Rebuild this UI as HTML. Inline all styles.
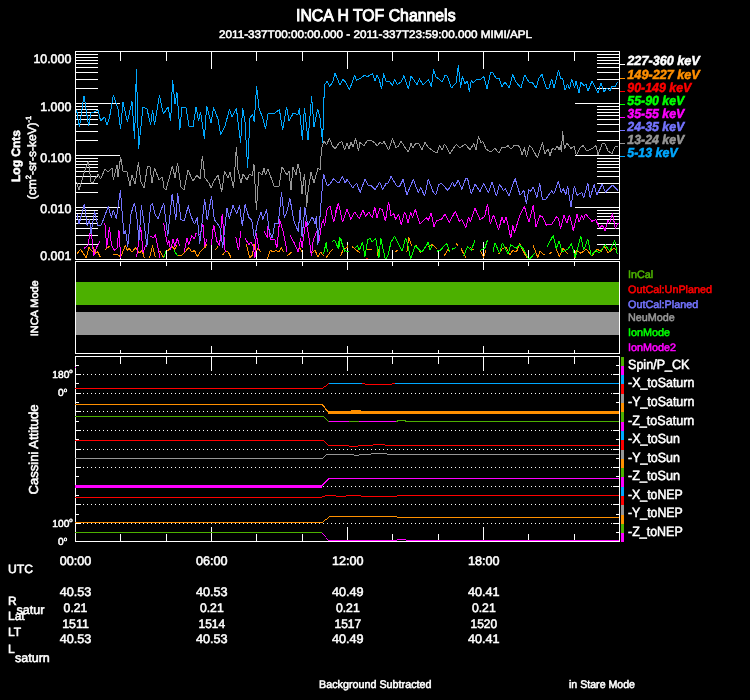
<!DOCTYPE html>
<html><head><meta charset="utf-8"><title>INCA H TOF Channels</title>
<style>
html,body{margin:0;padding:0;background:#000;}
svg{display:block;font-family:"Liberation Sans",sans-serif;will-change:transform;}
text{stroke-width:0.55px;text-rendering:geometricPrecision;}
</style></head><body>
<svg width="750" height="700" viewBox="0 0 750 700" shape-rendering="crispEdges">
<defs><clipPath id="ctop"><rect x="76" y="52" width="543" height="207"/></clipPath></defs>
<rect x="75" y="51" width="545" height="1" fill="#FFFFFF"/>
<rect x="75" y="259" width="545" height="1" fill="#FFFFFF"/>
<rect x="75" y="51" width="1" height="209" fill="#FFFFFF"/>
<rect x="619" y="51" width="1" height="209" fill="#FFFFFF"/>
<rect x="75" y="51" width="1" height="18" fill="#FFFFFF"/>
<rect x="75" y="242" width="1" height="18" fill="#FFFFFF"/>
<rect x="120" y="51" width="1" height="10" fill="#FFFFFF"/>
<rect x="120" y="250" width="1" height="10" fill="#FFFFFF"/>
<rect x="166" y="51" width="1" height="10" fill="#FFFFFF"/>
<rect x="166" y="250" width="1" height="10" fill="#FFFFFF"/>
<rect x="211" y="51" width="1" height="18" fill="#FFFFFF"/>
<rect x="211" y="242" width="1" height="18" fill="#FFFFFF"/>
<rect x="256" y="51" width="1" height="10" fill="#FFFFFF"/>
<rect x="256" y="250" width="1" height="10" fill="#FFFFFF"/>
<rect x="302" y="51" width="1" height="10" fill="#FFFFFF"/>
<rect x="302" y="250" width="1" height="10" fill="#FFFFFF"/>
<rect x="347" y="51" width="1" height="18" fill="#FFFFFF"/>
<rect x="347" y="242" width="1" height="18" fill="#FFFFFF"/>
<rect x="392" y="51" width="1" height="10" fill="#FFFFFF"/>
<rect x="392" y="250" width="1" height="10" fill="#FFFFFF"/>
<rect x="438" y="51" width="1" height="10" fill="#FFFFFF"/>
<rect x="438" y="250" width="1" height="10" fill="#FFFFFF"/>
<rect x="483" y="51" width="1" height="18" fill="#FFFFFF"/>
<rect x="483" y="242" width="1" height="18" fill="#FFFFFF"/>
<rect x="528" y="51" width="1" height="10" fill="#FFFFFF"/>
<rect x="528" y="250" width="1" height="10" fill="#FFFFFF"/>
<rect x="574" y="51" width="1" height="10" fill="#FFFFFF"/>
<rect x="574" y="250" width="1" height="10" fill="#FFFFFF"/>
<rect x="619" y="51" width="1" height="18" fill="#FFFFFF"/>
<rect x="619" y="242" width="1" height="18" fill="#FFFFFF"/>
<rect x="75" y="103" width="45" height="1" fill="#FFFFFF"/>
<rect x="575" y="103" width="45" height="1" fill="#FFFFFF"/>
<rect x="75" y="88" width="23" height="1" fill="#FFFFFF"/>
<rect x="597" y="88" width="23" height="1" fill="#FFFFFF"/>
<rect x="75" y="79" width="23" height="1" fill="#FFFFFF"/>
<rect x="597" y="79" width="23" height="1" fill="#FFFFFF"/>
<rect x="75" y="72" width="23" height="1" fill="#FFFFFF"/>
<rect x="597" y="72" width="23" height="1" fill="#FFFFFF"/>
<rect x="75" y="67" width="23" height="1" fill="#FFFFFF"/>
<rect x="597" y="67" width="23" height="1" fill="#FFFFFF"/>
<rect x="75" y="63" width="23" height="1" fill="#FFFFFF"/>
<rect x="597" y="63" width="23" height="1" fill="#FFFFFF"/>
<rect x="75" y="60" width="23" height="1" fill="#FFFFFF"/>
<rect x="597" y="60" width="23" height="1" fill="#FFFFFF"/>
<rect x="75" y="57" width="23" height="1" fill="#FFFFFF"/>
<rect x="597" y="57" width="23" height="1" fill="#FFFFFF"/>
<rect x="75" y="54" width="23" height="1" fill="#FFFFFF"/>
<rect x="597" y="54" width="23" height="1" fill="#FFFFFF"/>
<rect x="75" y="155" width="45" height="1" fill="#FFFFFF"/>
<rect x="575" y="155" width="45" height="1" fill="#FFFFFF"/>
<rect x="75" y="140" width="23" height="1" fill="#FFFFFF"/>
<rect x="597" y="140" width="23" height="1" fill="#FFFFFF"/>
<rect x="75" y="131" width="23" height="1" fill="#FFFFFF"/>
<rect x="597" y="131" width="23" height="1" fill="#FFFFFF"/>
<rect x="75" y="124" width="23" height="1" fill="#FFFFFF"/>
<rect x="597" y="124" width="23" height="1" fill="#FFFFFF"/>
<rect x="75" y="119" width="23" height="1" fill="#FFFFFF"/>
<rect x="597" y="119" width="23" height="1" fill="#FFFFFF"/>
<rect x="75" y="115" width="23" height="1" fill="#FFFFFF"/>
<rect x="597" y="115" width="23" height="1" fill="#FFFFFF"/>
<rect x="75" y="112" width="23" height="1" fill="#FFFFFF"/>
<rect x="597" y="112" width="23" height="1" fill="#FFFFFF"/>
<rect x="75" y="109" width="23" height="1" fill="#FFFFFF"/>
<rect x="597" y="109" width="23" height="1" fill="#FFFFFF"/>
<rect x="75" y="106" width="23" height="1" fill="#FFFFFF"/>
<rect x="597" y="106" width="23" height="1" fill="#FFFFFF"/>
<rect x="75" y="207" width="45" height="1" fill="#FFFFFF"/>
<rect x="575" y="207" width="45" height="1" fill="#FFFFFF"/>
<rect x="75" y="192" width="23" height="1" fill="#FFFFFF"/>
<rect x="597" y="192" width="23" height="1" fill="#FFFFFF"/>
<rect x="75" y="183" width="23" height="1" fill="#FFFFFF"/>
<rect x="597" y="183" width="23" height="1" fill="#FFFFFF"/>
<rect x="75" y="176" width="23" height="1" fill="#FFFFFF"/>
<rect x="597" y="176" width="23" height="1" fill="#FFFFFF"/>
<rect x="75" y="171" width="23" height="1" fill="#FFFFFF"/>
<rect x="597" y="171" width="23" height="1" fill="#FFFFFF"/>
<rect x="75" y="167" width="23" height="1" fill="#FFFFFF"/>
<rect x="597" y="167" width="23" height="1" fill="#FFFFFF"/>
<rect x="75" y="164" width="23" height="1" fill="#FFFFFF"/>
<rect x="597" y="164" width="23" height="1" fill="#FFFFFF"/>
<rect x="75" y="161" width="23" height="1" fill="#FFFFFF"/>
<rect x="597" y="161" width="23" height="1" fill="#FFFFFF"/>
<rect x="75" y="158" width="23" height="1" fill="#FFFFFF"/>
<rect x="597" y="158" width="23" height="1" fill="#FFFFFF"/>
<rect x="75" y="244" width="23" height="1" fill="#FFFFFF"/>
<rect x="597" y="244" width="23" height="1" fill="#FFFFFF"/>
<rect x="75" y="235" width="23" height="1" fill="#FFFFFF"/>
<rect x="597" y="235" width="23" height="1" fill="#FFFFFF"/>
<rect x="75" y="228" width="23" height="1" fill="#FFFFFF"/>
<rect x="597" y="228" width="23" height="1" fill="#FFFFFF"/>
<rect x="75" y="223" width="23" height="1" fill="#FFFFFF"/>
<rect x="597" y="223" width="23" height="1" fill="#FFFFFF"/>
<rect x="75" y="219" width="23" height="1" fill="#FFFFFF"/>
<rect x="597" y="219" width="23" height="1" fill="#FFFFFF"/>
<rect x="75" y="216" width="23" height="1" fill="#FFFFFF"/>
<rect x="597" y="216" width="23" height="1" fill="#FFFFFF"/>
<rect x="75" y="213" width="23" height="1" fill="#FFFFFF"/>
<rect x="597" y="213" width="23" height="1" fill="#FFFFFF"/>
<rect x="75" y="210" width="23" height="1" fill="#FFFFFF"/>
<rect x="597" y="210" width="23" height="1" fill="#FFFFFF"/>
<g clip-path="url(#ctop)">
<polyline points="76.9,254.0 80.6,249.3 86.2,257.7 89.0,247.5 92.7,252.1 93.7,247.5 95.5,254.0 97.4,251.2 100.2,256.8" fill="none" stroke="#FF9000" stroke-width="1" stroke-linejoin="bevel"/>
<polyline points="104.5,250.3 109.5,246.2" fill="none" stroke="#FF9000" stroke-width="1" stroke-linejoin="bevel"/>
<polyline points="113.3,254.0 117.9,254.9 120.7,256.8 125.4,245.6 127.3,250.3 129.1,248.0 131.9,252.1 135.7,247.5 139.4,253.1 142.2,250.3 144.1,257.7" fill="none" stroke="#FF9000" stroke-width="1" stroke-linejoin="bevel"/>
<polyline points="149.7,257.7 152.5,245.6 155.3,256.8" fill="none" stroke="#FF9000" stroke-width="1" stroke-linejoin="bevel"/>
<polyline points="159.9,251.2 163.7,257.7" fill="none" stroke="#FF9000" stroke-width="1" stroke-linejoin="bevel"/>
<polyline points="167.4,251.2 172.1,246.5 174.9,249.3 177.3,244.7" fill="none" stroke="#FF9000" stroke-width="1" stroke-linejoin="bevel"/>
<polyline points="177.3,255.9 182.3,254.9 188.9,247.5 191.7,252.1 194.5,250.3 197.3,256.8 200.1,252.1 203.8,248.4 206.6,244.7" fill="none" stroke="#FF9000" stroke-width="1" stroke-linejoin="bevel"/>
<polyline points="205.0,247.5 206.9,244.7" fill="none" stroke="#FF9000" stroke-width="1" stroke-linejoin="bevel"/>
<polyline points="215.3,250.3 218.1,246.5" fill="none" stroke="#FF9000" stroke-width="1" stroke-linejoin="bevel"/>
<polyline points="222.7,254.9 225.5,251.2 228.3,252.1 231.1,257.7" fill="none" stroke="#FF9000" stroke-width="1" stroke-linejoin="bevel"/>
<polyline points="246.1,243.7 249.8,257.7 252.6,254.9 253.9,243.7 255.4,252.1 258.2,248.4 261.0,252.1" fill="none" stroke="#FF9000" stroke-width="1" stroke-linejoin="bevel"/>
<polyline points="267.5,258.7 270.3,250.3 273.1,252.1 275.9,250.3 278.7,252.1 281.5,247.5 283.4,252.1" fill="none" stroke="#FF9000" stroke-width="1" stroke-linejoin="bevel"/>
<polyline points="287.1,255.9 291.8,252.1" fill="none" stroke="#FF9000" stroke-width="1" stroke-linejoin="bevel"/>
<polyline points="296.5,249.3 300.2,248.4 302.1,252.1" fill="none" stroke="#FF9000" stroke-width="1" stroke-linejoin="bevel"/>
<polyline points="311.4,253.1 315.1,250.3 317.9,256.8 320.7,252.1 323.5,255.9" fill="none" stroke="#FF9000" stroke-width="1" stroke-linejoin="bevel"/>
<polyline points="326.3,257.7 330.1,252.1 332.9,249.3" fill="none" stroke="#FF9000" stroke-width="1" stroke-linejoin="bevel"/>
<polyline points="340.6,255.9 343.4,249.3 347.1,247.5 347.1,244.7" fill="none" stroke="#FF9000" stroke-width="1" stroke-linejoin="bevel"/>
<polyline points="351.8,246.5 360.2,253.1" fill="none" stroke="#FF9000" stroke-width="1" stroke-linejoin="bevel"/>
<polyline points="365.8,249.3 372.3,249.3" fill="none" stroke="#FF9000" stroke-width="1" stroke-linejoin="bevel"/>
<polyline points="377.0,255.9 379.8,246.5" fill="none" stroke="#FF9000" stroke-width="1" stroke-linejoin="bevel"/>
<polyline points="394.7,252.1 397.5,250.3" fill="none" stroke="#FF9000" stroke-width="1" stroke-linejoin="bevel"/>
<polyline points="406.9,252.1 408.7,237.2 411.5,245.6" fill="none" stroke="#FF9000" stroke-width="1" stroke-linejoin="bevel"/>
<polyline points="416.2,245.6 420.9,253.1" fill="none" stroke="#FF9000" stroke-width="1" stroke-linejoin="bevel"/>
<polyline points="428.3,246.5 432.1,244.7 436.7,248.4" fill="none" stroke="#FF9000" stroke-width="1" stroke-linejoin="bevel"/>
<polyline points="444.2,255.9 447.9,249.3 449.8,251.2" fill="none" stroke="#FF9000" stroke-width="1" stroke-linejoin="bevel"/>
<polyline points="456.3,243.7 458.2,245.6" fill="none" stroke="#FF9000" stroke-width="1" stroke-linejoin="bevel"/>
<polyline points="461.0,248.4 465.7,257.7" fill="none" stroke="#FF9000" stroke-width="1" stroke-linejoin="bevel"/>
<polyline points="470.3,247.5 474.1,250.3" fill="none" stroke="#FF9000" stroke-width="1" stroke-linejoin="bevel"/>
<polyline points="480.0,250.3 483.7,257.7 485.6,250.3" fill="none" stroke="#FF9000" stroke-width="1" stroke-linejoin="bevel"/>
<polyline points="498.7,254.0 502.4,248.4 506.1,247.5 509.9,254.9 512.7,250.3 516.4,252.1 519.6,243.7 524.8,254.0 526.7,257.7" fill="none" stroke="#FF9000" stroke-width="1" stroke-linejoin="bevel"/>
<polyline points="533.2,245.6 537.9,257.7 539.7,251.2 544.4,254.9" fill="none" stroke="#FF9000" stroke-width="1" stroke-linejoin="bevel"/>
<polyline points="549.1,254.0 551.9,252.1" fill="none" stroke="#FF9000" stroke-width="1" stroke-linejoin="bevel"/>
<polyline points="556.5,249.3 559.3,256.8 563.1,248.4 567.7,254.0" fill="none" stroke="#FF9000" stroke-width="1" stroke-linejoin="bevel"/>
<polyline points="574.3,257.7 576.1,250.3 580.8,253.1 586.4,249.3 592.0,255.9 596.7,249.3 601.3,251.2 604.1,245.6 607.9,253.1 613.5,248.4 617.2,250.3" fill="none" stroke="#FF9000" stroke-width="1" stroke-linejoin="bevel"/>
<polyline points="163.7,257.7 165.9,251.2" fill="none" stroke="#00FF00" stroke-width="1" stroke-linejoin="bevel"/>
<polyline points="173.9,250.3 177.7,255.9" fill="none" stroke="#00FF00" stroke-width="1" stroke-linejoin="bevel"/>
<polyline points="323.5,254.0 326.3,241.9 327.3,252.1" fill="none" stroke="#00FF00" stroke-width="1" stroke-linejoin="bevel"/>
<polyline points="331.9,241.9 334.7,240.0 337.9,247.5 339.8,237.2 342.2,244.7 345.0,252.1" fill="none" stroke="#00FF00" stroke-width="1" stroke-linejoin="bevel"/>
<polyline points="335.0,240.9 338.7,248.4 340.6,238.1 344.3,250.3 349.0,252.1" fill="none" stroke="#00FF00" stroke-width="1" stroke-linejoin="bevel"/>
<polyline points="354.6,248.4 357.4,245.6 359.3,250.3 362.6,241.9 364.9,256.8 367.7,240.0 369.9,238.1 372.3,241.9 375.7,238.1 378.9,257.7 380.7,238.1 385.4,259.6 388.2,254.9 391.0,241.9 394.7,236.3 399.4,245.6 402.2,251.2 405.6,238.1 407.8,244.7 410.6,259.6 415.3,245.6 421.8,252.1 426.5,245.6 428.3,241.9 430.2,250.3 432.1,244.7" fill="none" stroke="#00FF00" stroke-width="1" stroke-linejoin="bevel"/>
<polyline points="436.7,251.2 440.5,250.3 444.2,245.6 447.0,243.7 449.8,252.1" fill="none" stroke="#00FF00" stroke-width="1" stroke-linejoin="bevel"/>
<polyline points="451.7,249.3 456.3,247.5" fill="none" stroke="#00FF00" stroke-width="1" stroke-linejoin="bevel"/>
<polyline points="463.8,255.9 467.5,246.5 471.3,250.3 475.0,240.0" fill="none" stroke="#00FF00" stroke-width="1" stroke-linejoin="bevel"/>
<polyline points="480.0,250.3 484.7,248.4 487.5,240.0" fill="none" stroke="#00FF00" stroke-width="1" stroke-linejoin="bevel"/>
<polyline points="493.1,252.1 494.9,242.8 499.6,253.1 502.4,242.8 508.0,254.0 510.8,244.7 516.4,248.4 519.2,244.7 522.9,248.4 528.9,259.6 535.1,253.1" fill="none" stroke="#00FF00" stroke-width="1" stroke-linejoin="bevel"/>
<polyline points="547.2,246.5 553.2,235.3 556.2,248.4 559.3,240.9 562.1,252.1 567.7,249.3 571.5,243.7 575.2,257.7 577.1,250.3 580.8,236.3 583.6,250.3 587.9,239.1 591.1,255.9 595.7,250.3 599.5,253.1 605.1,244.7 609.7,251.2 614.8,240.6 617.2,254.0" fill="none" stroke="#00FF00" stroke-width="1" stroke-linejoin="bevel"/>
<polyline points="84.3,248.4 88.1,244.7 90.9,227.9 93.7,255.9 96.5,247.5 100.2,240.9" fill="none" stroke="#FF00FF" stroke-width="1" stroke-linejoin="bevel"/>
<polyline points="104.9,223.2 106.7,247.5 109.5,226.9 111.4,244.7 114.2,250.3 117.0,248.4 118.9,229.7 120.7,257.7" fill="none" stroke="#FF00FF" stroke-width="1" stroke-linejoin="bevel"/>
<polyline points="136.6,256.8 140.7,226.9 143.1,253.1 145.6,244.7" fill="none" stroke="#FF00FF" stroke-width="1" stroke-linejoin="bevel"/>
<polyline points="150.6,236.3 153.4,238.1 155.3,234.4 158.1,248.4 159.9,257.7" fill="none" stroke="#FF00FF" stroke-width="1" stroke-linejoin="bevel"/>
<polyline points="163.7,223.2 167.4,244.7 168.9,240.0 170.6,250.3 173.0,239.1 174.9,246.5 177.3,238.1 179.5,245.6" fill="none" stroke="#FF00FF" stroke-width="1" stroke-linejoin="bevel"/>
<polyline points="184.2,252.1 187.0,238.1 188.9,244.7 191.7,235.3 194.5,239.1 196.3,232.5" fill="none" stroke="#FF00FF" stroke-width="1" stroke-linejoin="bevel"/>
<polyline points="199.7,235.3 202.9,224.1 204.7,246.5 206.6,240.0" fill="none" stroke="#FF00FF" stroke-width="1" stroke-linejoin="bevel"/>
<polyline points="213.1,229.7 215.0,226.0" fill="none" stroke="#FF00FF" stroke-width="1" stroke-linejoin="bevel"/>
<polyline points="205.0,244.7 206.9,239.1" fill="none" stroke="#FF00FF" stroke-width="1" stroke-linejoin="bevel"/>
<polyline points="211.5,244.7 213.4,225.1 217.1,241.9 219.6,245.6 222.2,213.9 225.2,252.1" fill="none" stroke="#FF00FF" stroke-width="1" stroke-linejoin="bevel"/>
<polyline points="227.4,236.3" fill="none" stroke="#FF00FF" stroke-width="1" stroke-linejoin="bevel"/>
<polyline points="235.8,237.2 238.6,250.3 240.8,230.7" fill="none" stroke="#FF00FF" stroke-width="1" stroke-linejoin="bevel"/>
<polyline points="245.1,238.1 248.9,244.7 250.7,241.9 253.2,246.5 255.0,257.7 256.3,233.5 259.1,250.3" fill="none" stroke="#FF00FF" stroke-width="1" stroke-linejoin="bevel"/>
<polyline points="263.8,230.7 267.5,238.1 268.1,224.1 270.3,239.1 275.0,240.0 276.9,248.4 279.7,219.5 283.4,232.5 287.1,252.1" fill="none" stroke="#FF00FF" stroke-width="1" stroke-linejoin="bevel"/>
<polyline points="289.9,235.3 293.7,241.9 298.3,252.1 300.6,238.1 302.1,247.5 305.8,221.3 308.6,234.4 311.4,255.9 313.3,240.0 317.9,228.8 318.9,241.9 321.7,224.1 323.5,219.5 324.5,226.0 327.3,208.3 330.1,206.4 333.8,222.3" fill="none" stroke="#FF00FF" stroke-width="1" stroke-linejoin="bevel"/>
<polyline points="333.8,222.3 338.5,202.7 335.0,212.9 338.4,202.7 342.5,222.3 347.1,209.2 350.9,219.5 354.6,212.0 359.3,218.5 363.0,210.1 365.8,216.7 368.6,212.0 372.3,217.6 374.8,207.3 377.0,217.6 379.8,208.3 382.6,210.1 385.4,221.3 388.6,201.7 391.0,215.7 393.8,213.9 395.7,219.5 398.5,213.9 401.3,225.1 404.4,212.0 405.9,214.8 408.2,223.2 410.6,212.0 412.5,217.6 415.3,209.2 419.9,224.1 426.5,217.6 428.3,220.4 431.1,212.9 433.9,226.9 436.7,220.4 441.4,219.5 445.1,213.9 449.2,222.3 455.4,211.1 459.1,221.3 461.9,219.5 465.7,227.9 468.5,216.7 470.3,222.3 475.0,208.3 480.0,219.5 484.7,216.7 487.5,203.6 490.3,224.1 493.4,214.8 498.7,229.7 502.0,216.7 503.9,223.2 506.1,216.7 510.8,238.1 512.7,225.1 514.5,232.5 520.1,214.8 524.4,206.4 528.9,222.3 533.2,205.5 536.0,226.9 539.7,215.7 542.5,216.7 546.3,225.1 551.9,224.1 556.5,216.7 558.4,218.5 560.6,228.8 564.0,214.8 566.8,223.2 569.6,214.8 573.3,230.7 577.1,213.9 578.9,222.3 581.7,215.7 583.6,219.5 585.5,213.9 592.0,221.3 595.7,219.5 599.5,227.9 602.3,225.1 605.1,230.7 607.9,220.4 609.7,223.2 612.5,212.9 615.3,228.8 618.1,223.2" fill="none" stroke="#FF00FF" stroke-width="1" stroke-linejoin="bevel"/>
<polyline points="76.9,213.9 79.1,224.1 84.3,203.6 87.1,226.0 89.6,219.5 90.9,234.4 94.6,211.1 97.8,226.0 101.1,225.1 103.9,218.5 108.2,206.4 111.4,217.6 113.3,210.1 116.4,218.5 120.4,190.5 123.9,234.4 125.4,229.7 127.8,246.5 131.0,213.9 134.4,202.7 136.6,214.8 139.0,240.9 141.3,205.5 143.7,220.4 146.9,246.5 150.6,205.5 152.5,203.6 155.3,214.8 158.1,218.5 163.7,202.7 167.8,236.3 172.1,194.3 175.8,219.5 177.7,193.3 181.0,219.5 184.2,221.3 188.3,205.5 190.7,215.7 194.5,224.1 197.3,217.6 199.7,243.7 204.7,198.9 207.2,220.4 211.5,196.1 214.3,219.5 219.9,226.9 222.7,247.5 227.0,208.3 229.3,218.5 233.0,205.5 236.7,213.9 239.5,205.5 242.3,226.0 245.1,204.5 248.9,217.6 251.7,220.4 254.5,239.1 257.3,223.2 261.0,212.0 262.9,219.5 266.6,209.2 269.4,231.6 272.2,238.1 275.0,223.2 278.2,224.1 281.5,192.4 284.3,217.6 287.1,211.1 289.9,198.0 293.7,220.4 298.3,231.6 300.2,207.3 302.1,237.2 304.9,207.3 307.7,226.0 312.3,216.7 315.1,224.1 316.4,215.7 317.9,244.7 321.7,194.3 323.5,173.7 327.3,185.9 330.1,184.0 333.8,178.4 335.0,180.3 338.7,183.1 342.5,176.5 345.3,183.1 347.1,179.3 352.7,187.7 356.5,183.1 360.2,192.4 364.9,179.3 368.6,185.9 371.4,185.9 375.1,189.6 379.8,182.1 382.6,189.6 386.3,183.1 388.2,183.1 391.0,176.5 396.6,185.9 399.4,186.8 403.1,179.3 406.9,195.2 409.7,187.7 413.4,179.3 418.1,192.4 420.9,187.7 424.6,196.1 428.3,179.3 433.0,191.5 435.8,195.2 438.6,184.9 441.4,183.1 447.9,190.5 452.6,182.1 454.5,186.8 458.2,180.3 461.9,189.6 465.7,178.4 467.5,178.4 471.3,194.3 475.0,184.0 480.0,191.5 483.7,183.1 488.4,192.4 492.1,182.1 496.4,196.1 499.6,184.0 503.3,190.5 505.2,188.7 508.9,196.1 515.1,178.4 520.1,195.2 523.9,190.5 526.3,203.6 528.9,189.6 530.4,191.5 533.2,186.8 536.9,198.0 539.7,183.1 542.5,199.9 545.3,199.9 551.9,190.5 553.7,194.3 558.4,181.2 561.2,192.4 563.1,188.7 565.9,194.3 567.7,185.9 570.9,207.3 574.3,185.9 577.1,195.2 581.7,192.4 583.6,198.0 587.9,183.1 590.1,198.0 594.2,184.0 596.7,195.2 602.3,184.0 605.4,192.4 612.5,184.9 618.1,190.5" fill="none" stroke="#7474FF" stroke-width="1" stroke-linejoin="bevel"/>
<polyline points="76.6,182.0 79.0,190.0 84.0,173.0 88.4,161.0 91.0,182.0 93.0,183.0 98.0,174.0 100.6,179.0 105.0,169.0 108.0,172.0 112.0,168.0 113.4,180.0 117.0,165.0 118.0,177.0 120.6,157.0 123.0,171.0 127.0,172.0 130.0,186.0 132.0,175.0 135.0,184.0 138.4,162.4 141.0,182.0 144.0,188.0 147.4,167.0 150.0,166.6 152.0,183.0 154.6,168.0 159.0,180.0 162.4,177.0 164.0,188.0 166.0,190.0 172.4,166.0 175.0,178.0 177.6,163.0 181.0,187.0 184.0,190.0 188.0,170.0 193.0,181.0 197.0,175.0 200.0,179.0 202.4,155.6 205.0,178.0 209.0,183.0 211.0,188.0 214.0,181.0 218.0,175.0 221.8,192.0 224.6,171.0 228.0,178.0 230.0,172.4 233.6,188.0 236.4,146.6 238.0,170.0 241.0,183.0 243.0,174.0 247.0,180.0 249.4,174.0 252.4,175.6 254.0,164.4 256.4,210.0 259.0,172.0 262.0,175.0 264.0,168.0 265.4,175.0 268.0,169.0 274.0,186.0 279.0,186.4 282.0,167.0 287.0,175.0 289.0,171.0 291.0,190.0 293.0,167.0 296.0,175.0 298.0,164.0 300.6,175.0 302.0,194.0 304.4,174.0 305.6,186.0 306.6,207.0 308.2,190.0 311.0,172.4 314.0,183.0 318.0,168.0 320.0,170.0 321.6,148.0 324.0,141.0 326.6,145.0 329.4,138.0 332.0,145.0 335.0,149.0 339.0,143.0 342.0,141.6 344.6,150.0 347.0,143.0 349.0,149.0 351.0,142.0 353.0,147.0 355.6,138.6 358.6,151.0 360.0,142.4 364.0,146.0 367.0,141.0 371.0,140.4 375.0,143.0 377.0,146.0 380.0,142.4 382.0,144.0 384.0,141.6 388.6,150.0 392.6,138.6 396.0,148.0 398.6,146.0 401.0,141.0 404.0,146.0 408.4,152.0 411.0,143.6 413.0,148.0 416.0,143.0 419.0,144.0 422.0,150.0 425.0,142.4 428.0,147.0 434.0,151.6 437.0,153.0 439.6,145.6 442.0,150.0 444.6,144.0 447.0,148.0 450.0,154.0 453.0,149.0 456.4,144.4 460.0,148.0 463.0,145.6 465.0,144.0 470.0,149.6 474.0,143.6 476.0,150.0 478.4,136.4 481.0,142.4 483.0,141.6 486.0,149.0 490.6,152.0 495.0,148.4 499.0,153.0 502.0,147.0 505.0,147.6 508.0,145.6 511.0,149.0 514.0,145.6 517.4,145.0 520.0,147.6 522.0,155.0 524.4,147.6 526.4,157.0 529.4,145.0 532.0,148.0 537.4,158.0 542.4,142.4 545.0,154.0 548.0,149.0 550.0,155.6 552.4,148.4 555.0,149.6 557.4,146.0 559.0,150.0 560.4,145.6 561.4,152.0 562.6,130.6 564.4,149.0 567.0,143.0 571.0,148.4 574.0,146.0 576.4,155.0 580.0,148.0 583.0,145.6 587.0,151.0 593.0,148.0 596.0,145.6 598.0,155.0 602.0,144.0 605.0,143.6 608.0,151.0 612.0,153.6 615.0,147.0 617.6,146.4" fill="none" stroke="#969696" stroke-width="1" stroke-linejoin="bevel"/>
<polyline points="76.6,110.0 79.4,127.0 84.0,95.6 88.6,126.0 91.0,113.0 94.0,112.0 98.0,110.0 100.6,121.0 104.6,117.0 107.0,125.0 109.4,118.0 113.4,95.0 118.0,109.0 120.6,129.0 123.0,102.4 127.4,122.0 132.0,101.6 134.6,139.0 136.4,69.4 138.6,149.0 143.0,107.0 147.0,109.0 150.6,125.0 152.6,110.0 154.6,125.0 159.4,95.6 163.4,114.0 168.0,107.0 170.6,121.0 172.6,80.4 175.0,104.0 177.0,92.4 179.8,130.0 182.0,107.0 186.0,108.0 189.0,126.0 193.0,127.0 196.0,107.0 198.6,121.0 200.6,111.6 204.4,139.0 206.6,105.6 211.0,123.0 213.6,107.6 218.0,119.0 220.6,135.0 225.0,126.0 229.4,109.6 232.0,117.0 236.4,108.4 240.6,143.0 242.6,107.6 245.0,122.0 247.6,167.6 250.0,118.0 252.6,114.0 254.2,122.0 256.6,86.4 259.0,108.0 263.0,119.0 265.6,129.0 268.0,114.0 274.0,113.6 279.4,109.6 282.6,130.0 286.6,107.0 289.0,121.0 293.0,113.6 298.0,114.4 299.4,108.4 302.4,140.0 304.4,108.0 308.0,140.0 311.6,96.4 314.0,127.0 317.6,109.0 320.0,118.0 322.6,143.0 324.4,85.0 327.0,81.4 330.0,86.4 333.0,81.0 335.0,73.0 340.0,85.0 343.0,79.0 346.0,83.0 349.4,89.4 352.0,83.0 354.6,75.0 356.6,80.4 361.0,78.0 365.0,75.0 367.0,77.0 372.4,73.6 375.0,81.0 377.0,75.0 379.4,80.0 381.6,89.0 383.6,73.6 386.0,81.0 390.0,82.0 392.6,85.6 394.6,79.0 397.4,84.4 401.0,82.0 404.0,75.6 408.4,89.0 411.0,76.4 414.0,80.0 417.0,85.0 419.4,78.6 423.0,85.0 426.0,82.0 428.6,79.6 431.4,87.0 433.6,69.4 436.0,77.0 439.0,79.0 442.0,82.0 445.0,75.6 447.4,76.0 451.4,88.0 456.0,83.0 458.4,65.4 460.6,88.0 462.4,76.0 465.0,83.6 467.4,81.0 469.4,92.0 471.4,80.0 473.4,83.0 476.0,80.0 480.0,79.6 484.0,76.6 487.0,89.0 490.6,72.4 493.0,73.0 496.6,79.0 499.0,78.0 502.0,87.0 505.0,82.0 509.4,88.0 512.6,74.4 516.0,82.0 521.0,88.0 524.6,75.0 529.0,82.0 532.6,83.0 536.0,88.0 539.0,78.0 542.0,74.4 546.6,89.0 549.0,88.0 551.6,79.0 554.0,88.0 558.4,70.0 561.0,79.0 562.6,78.0 565.0,90.0 567.6,84.0 569.6,89.0 571.6,79.0 574.6,88.0 576.0,81.0 579.0,93.0 581.0,82.0 584.0,86.0 586.0,84.0 588.0,91.0 592.0,81.0 595.0,87.0 598.0,93.0 601.0,83.0 604.0,92.0 607.0,88.0 610.0,91.0 612.0,86.0 615.0,87.0 617.6,82.0" fill="none" stroke="#00A8FF" stroke-width="1" stroke-linejoin="bevel"/>
<rect x="366" y="258" width="2" height="1" fill="#FF0000"/>
</g>
<rect x="620" y="64" width="5" height="1" fill="#FFFFFF"/>
<text x="627.3" y="65.2" font-size="13.2" fill="#FFFFFF" stroke="#FFFFFF" font-weight="bold" font-style="italic" textLength="72.5" lengthAdjust="spacingAndGlyphs">227-360 keV</text>
<rect x="620" y="78" width="5" height="1" fill="#FF9000"/>
<text x="627.3" y="79.2" font-size="13.2" fill="#FF9000" stroke="#FF9000" font-weight="bold" font-style="italic" textLength="72.5" lengthAdjust="spacingAndGlyphs">149-227 keV</text>
<rect x="620" y="91" width="5" height="1" fill="#FF0000"/>
<text x="627.3" y="92.2" font-size="13.2" fill="#FF0000" stroke="#FF0000" font-weight="bold" font-style="italic" textLength="64" lengthAdjust="spacingAndGlyphs">90-149 keV</text>
<rect x="620" y="104" width="5" height="1" fill="#00FF00"/>
<text x="627.3" y="105.2" font-size="13.2" fill="#00FF00" stroke="#00FF00" font-weight="bold" font-style="italic" textLength="57" lengthAdjust="spacingAndGlyphs">55-90 keV</text>
<rect x="620" y="117" width="5" height="1" fill="#FF00FF"/>
<text x="627.3" y="118.2" font-size="13.2" fill="#FF00FF" stroke="#FF00FF" font-weight="bold" font-style="italic" textLength="57" lengthAdjust="spacingAndGlyphs">35-55 keV</text>
<rect x="620" y="130" width="5" height="1" fill="#7474FF"/>
<text x="627.3" y="131.2" font-size="13.2" fill="#7474FF" stroke="#7474FF" font-weight="bold" font-style="italic" textLength="57" lengthAdjust="spacingAndGlyphs">24-35 keV</text>
<rect x="620" y="143" width="5" height="1" fill="#969696"/>
<text x="627.3" y="144.2" font-size="13.2" fill="#969696" stroke="#969696" font-weight="bold" font-style="italic" textLength="57" lengthAdjust="spacingAndGlyphs">13-24 keV</text>
<rect x="620" y="156" width="5" height="1" fill="#00A8FF"/>
<text x="627.3" y="157.2" font-size="13.2" fill="#00A8FF" stroke="#00A8FF" font-weight="bold" font-style="italic" textLength="50.3" lengthAdjust="spacingAndGlyphs">5-13 keV</text>
<text x="375.8" y="21.4" font-size="17" fill="#FFFFFF" stroke="#FFFFFF" text-anchor="middle" textLength="159.5" lengthAdjust="spacingAndGlyphs" style="stroke-width:0.95px">INCA H TOF Channels</text>
<text x="375.5" y="37.5" font-size="11" fill="#FFFFFF" stroke="#FFFFFF" text-anchor="middle" textLength="313" lengthAdjust="spacingAndGlyphs">2011-337T00:00:00.000 - 2011-337T23:59:00.000 MIMI/APL</text>
<text x="71.3" y="62.8" font-size="12.4" fill="#FFFFFF" stroke="#FFFFFF" text-anchor="end">10.000</text>
<text x="71.3" y="110.8" font-size="12.4" fill="#FFFFFF" stroke="#FFFFFF" text-anchor="end">1.000</text>
<text x="71.3" y="161.8" font-size="12.4" fill="#FFFFFF" stroke="#FFFFFF" text-anchor="end">0.100</text>
<text x="71.3" y="213.3" font-size="12.4" fill="#FFFFFF" stroke="#FFFFFF" text-anchor="end">0.010</text>
<text x="71.3" y="259.5" font-size="12.4" fill="#FFFFFF" stroke="#FFFFFF" text-anchor="end">0.001</text>
<text x="20" y="156" font-size="12" fill="#FFFFFF" stroke="#FFFFFF" text-anchor="middle" font-weight="bold" transform="rotate(-90 20 156)">Log Cnts</text>
<text x="36" y="157.5" font-size="12" fill="#fff" stroke="#fff" text-anchor="middle" transform="rotate(-90 36 157.5)">(cm<tspan font-size="7.5" dy="-5">2</tspan><tspan dy="5">-sr-s-keV)</tspan><tspan font-size="7.5" dy="-5">-1</tspan></text>
<rect x="75" y="282" width="545" height="23" fill="#4CB000"/>
<rect x="75" y="312" width="545" height="23" fill="#969696"/>
<rect x="75" y="261" width="545" height="1" fill="#FFFFFF"/>
<rect x="75" y="353" width="545" height="1" fill="#FFFFFF"/>
<rect x="75" y="261" width="1" height="93" fill="#FFFFFF"/>
<rect x="619" y="261" width="1" height="93" fill="#FFFFFF"/>
<rect x="75" y="261" width="1" height="9" fill="#FFFFFF"/>
<rect x="75" y="346" width="1" height="8" fill="#FFFFFF"/>
<rect x="120" y="261" width="1" height="5" fill="#FFFFFF"/>
<rect x="120" y="350" width="1" height="4" fill="#FFFFFF"/>
<rect x="166" y="261" width="1" height="5" fill="#FFFFFF"/>
<rect x="166" y="350" width="1" height="4" fill="#FFFFFF"/>
<rect x="211" y="261" width="1" height="9" fill="#FFFFFF"/>
<rect x="211" y="346" width="1" height="8" fill="#FFFFFF"/>
<rect x="256" y="261" width="1" height="5" fill="#FFFFFF"/>
<rect x="256" y="350" width="1" height="4" fill="#FFFFFF"/>
<rect x="302" y="261" width="1" height="5" fill="#FFFFFF"/>
<rect x="302" y="350" width="1" height="4" fill="#FFFFFF"/>
<rect x="347" y="261" width="1" height="9" fill="#FFFFFF"/>
<rect x="347" y="346" width="1" height="8" fill="#FFFFFF"/>
<rect x="392" y="261" width="1" height="5" fill="#FFFFFF"/>
<rect x="392" y="350" width="1" height="4" fill="#FFFFFF"/>
<rect x="438" y="261" width="1" height="5" fill="#FFFFFF"/>
<rect x="438" y="350" width="1" height="4" fill="#FFFFFF"/>
<rect x="483" y="261" width="1" height="9" fill="#FFFFFF"/>
<rect x="483" y="346" width="1" height="8" fill="#FFFFFF"/>
<rect x="528" y="261" width="1" height="5" fill="#FFFFFF"/>
<rect x="528" y="350" width="1" height="4" fill="#FFFFFF"/>
<rect x="574" y="261" width="1" height="5" fill="#FFFFFF"/>
<rect x="574" y="350" width="1" height="4" fill="#FFFFFF"/>
<rect x="619" y="261" width="1" height="9" fill="#FFFFFF"/>
<rect x="619" y="346" width="1" height="8" fill="#FFFFFF"/>
<text x="38" y="308.3" font-size="10.5" fill="#FFFFFF" stroke="#FFFFFF" text-anchor="middle" textLength="56" lengthAdjust="spacingAndGlyphs" transform="rotate(-90 38 308.3)">INCA Mode</text>
<text x="628" y="277.7" font-size="10.8" fill="#4CB000" stroke="#4CB000">InCal</text>
<text x="628" y="292.90000000000003" font-size="10.8" fill="#FF0000" stroke="#FF0000">OutCal:UnPlaned</text>
<text x="628" y="308.2" font-size="10.8" fill="#7474FF" stroke="#7474FF">OutCal:Planed</text>
<text x="628" y="320.7" font-size="10.8" fill="#969696" stroke="#969696">NeuMode</text>
<text x="628" y="335.7" font-size="10.8" fill="#00FF00" stroke="#00FF00">IonMode</text>
<text x="628" y="351.3" font-size="10.8" fill="#FF00FF" stroke="#FF00FF">IonMode2</text>
<line x1="75" y1="374.5" x2="620" y2="374.5" stroke="#fff" stroke-width="1" stroke-dasharray="1 3"/>
<rect x="75" y="374" width="6" height="1" fill="#FFFFFF"/>
<rect x="613" y="374" width="7" height="1" fill="#FFFFFF"/>
<line x1="75" y1="393.5" x2="620" y2="393.5" stroke="#fff" stroke-width="1" stroke-dasharray="1 3"/>
<rect x="75" y="393" width="6" height="1" fill="#FFFFFF"/>
<rect x="613" y="393" width="7" height="1" fill="#FFFFFF"/>
<line x1="75" y1="411.5" x2="620" y2="411.5" stroke="#fff" stroke-width="1" stroke-dasharray="1 3"/>
<rect x="75" y="411" width="6" height="1" fill="#FFFFFF"/>
<rect x="613" y="411" width="7" height="1" fill="#FFFFFF"/>
<line x1="75" y1="430.5" x2="620" y2="430.5" stroke="#fff" stroke-width="1" stroke-dasharray="1 3"/>
<rect x="75" y="430" width="6" height="1" fill="#FFFFFF"/>
<rect x="613" y="430" width="7" height="1" fill="#FFFFFF"/>
<line x1="75" y1="449.5" x2="620" y2="449.5" stroke="#fff" stroke-width="1" stroke-dasharray="1 3"/>
<rect x="75" y="449" width="6" height="1" fill="#FFFFFF"/>
<rect x="613" y="449" width="7" height="1" fill="#FFFFFF"/>
<line x1="75" y1="467.5" x2="620" y2="467.5" stroke="#fff" stroke-width="1" stroke-dasharray="1 3"/>
<rect x="75" y="467" width="6" height="1" fill="#FFFFFF"/>
<rect x="613" y="467" width="7" height="1" fill="#FFFFFF"/>
<line x1="75" y1="486.5" x2="620" y2="486.5" stroke="#fff" stroke-width="1" stroke-dasharray="1 3"/>
<rect x="75" y="486" width="6" height="1" fill="#FFFFFF"/>
<rect x="613" y="486" width="7" height="1" fill="#FFFFFF"/>
<line x1="75" y1="504.5" x2="620" y2="504.5" stroke="#fff" stroke-width="1" stroke-dasharray="1 3"/>
<rect x="75" y="504" width="6" height="1" fill="#FFFFFF"/>
<rect x="613" y="504" width="7" height="1" fill="#FFFFFF"/>
<line x1="75" y1="523.5" x2="620" y2="523.5" stroke="#fff" stroke-width="1" stroke-dasharray="1 3"/>
<rect x="75" y="523" width="6" height="1" fill="#FFFFFF"/>
<rect x="613" y="523" width="7" height="1" fill="#FFFFFF"/>
<rect x="75" y="365" width="4" height="1" fill="#FFFFFF"/>
<rect x="616" y="365" width="4" height="1" fill="#FFFFFF"/>
<rect x="75" y="383" width="4" height="1" fill="#FFFFFF"/>
<rect x="616" y="383" width="4" height="1" fill="#FFFFFF"/>
<rect x="75" y="402" width="4" height="1" fill="#FFFFFF"/>
<rect x="616" y="402" width="4" height="1" fill="#FFFFFF"/>
<rect x="75" y="421" width="4" height="1" fill="#FFFFFF"/>
<rect x="616" y="421" width="4" height="1" fill="#FFFFFF"/>
<rect x="75" y="439" width="4" height="1" fill="#FFFFFF"/>
<rect x="616" y="439" width="4" height="1" fill="#FFFFFF"/>
<rect x="75" y="458" width="4" height="1" fill="#FFFFFF"/>
<rect x="616" y="458" width="4" height="1" fill="#FFFFFF"/>
<rect x="75" y="476" width="4" height="1" fill="#FFFFFF"/>
<rect x="616" y="476" width="4" height="1" fill="#FFFFFF"/>
<rect x="75" y="495" width="4" height="1" fill="#FFFFFF"/>
<rect x="616" y="495" width="4" height="1" fill="#FFFFFF"/>
<rect x="75" y="514" width="4" height="1" fill="#FFFFFF"/>
<rect x="616" y="514" width="4" height="1" fill="#FFFFFF"/>
<rect x="75" y="532" width="4" height="1" fill="#FFFFFF"/>
<rect x="616" y="532" width="4" height="1" fill="#FFFFFF"/>
<rect x="75" y="356" width="545" height="1" fill="#FFFFFF"/>
<rect x="75" y="541" width="545" height="1" fill="#FFFFFF"/>
<rect x="75" y="356" width="1" height="186" fill="#FFFFFF"/>
<rect x="619" y="356" width="1" height="186" fill="#FFFFFF"/>
<rect x="75" y="356" width="1" height="15" fill="#FFFFFF"/>
<rect x="75" y="527" width="1" height="15" fill="#FFFFFF"/>
<rect x="120" y="356" width="1" height="8" fill="#FFFFFF"/>
<rect x="120" y="534" width="1" height="8" fill="#FFFFFF"/>
<rect x="166" y="356" width="1" height="8" fill="#FFFFFF"/>
<rect x="166" y="534" width="1" height="8" fill="#FFFFFF"/>
<rect x="211" y="356" width="1" height="15" fill="#FFFFFF"/>
<rect x="211" y="527" width="1" height="15" fill="#FFFFFF"/>
<rect x="256" y="356" width="1" height="8" fill="#FFFFFF"/>
<rect x="256" y="534" width="1" height="8" fill="#FFFFFF"/>
<rect x="302" y="356" width="1" height="8" fill="#FFFFFF"/>
<rect x="302" y="534" width="1" height="8" fill="#FFFFFF"/>
<rect x="347" y="356" width="1" height="15" fill="#FFFFFF"/>
<rect x="347" y="527" width="1" height="15" fill="#FFFFFF"/>
<rect x="392" y="356" width="1" height="8" fill="#FFFFFF"/>
<rect x="392" y="534" width="1" height="8" fill="#FFFFFF"/>
<rect x="438" y="356" width="1" height="8" fill="#FFFFFF"/>
<rect x="438" y="534" width="1" height="8" fill="#FFFFFF"/>
<rect x="483" y="356" width="1" height="15" fill="#FFFFFF"/>
<rect x="483" y="527" width="1" height="15" fill="#FFFFFF"/>
<rect x="528" y="356" width="1" height="8" fill="#FFFFFF"/>
<rect x="528" y="534" width="1" height="8" fill="#FFFFFF"/>
<rect x="574" y="356" width="1" height="8" fill="#FFFFFF"/>
<rect x="574" y="534" width="1" height="8" fill="#FFFFFF"/>
<rect x="619" y="356" width="1" height="15" fill="#FFFFFF"/>
<rect x="619" y="527" width="1" height="15" fill="#FFFFFF"/>
<rect x="75" y="367" width="1" height="1" fill="#FF00FF"/>
<rect x="75" y="388" width="247" height="1" fill="#FF0000"/>
<rect x="322" y="388" width="1" height="1" fill="#FF0000"/>
<rect x="323" y="387" width="1" height="1" fill="#FF0000"/>
<rect x="324" y="386" width="1" height="1" fill="#FF0000"/>
<rect x="325" y="386" width="1" height="1" fill="#FF0000"/>
<rect x="326" y="385" width="1" height="1" fill="#FF0000"/>
<rect x="327" y="384" width="1" height="1" fill="#FF0000"/>
<rect x="328" y="383" width="1" height="1" fill="#FF0000"/>
<rect x="329" y="383" width="33" height="1" fill="#00A8FF"/>
<rect x="362" y="383" width="3" height="1" fill="#FF0000"/>
<rect x="365" y="384" width="27" height="1" fill="#FF0000"/>
<rect x="392" y="383" width="3" height="1" fill="#FF0000"/>
<rect x="395" y="383" width="224" height="1" fill="#00A8FF"/>
<rect x="75" y="404" width="247" height="1" fill="#FF9000"/>
<rect x="322" y="404" width="1" height="2" fill="#FF9000"/>
<rect x="323" y="405" width="1" height="2" fill="#FF9000"/>
<rect x="324" y="406" width="1" height="2" fill="#FF9000"/>
<rect x="325" y="408" width="1" height="2" fill="#FF9000"/>
<rect x="326" y="409" width="1" height="2" fill="#FF9000"/>
<rect x="327" y="410" width="1" height="2" fill="#FF9000"/>
<rect x="328" y="411" width="1" height="2" fill="#FF9000"/>
<rect x="328" y="411" width="291" height="3" fill="#FF9000"/>
<rect x="351" y="410" width="10" height="1" fill="#FF9000"/>
<rect x="75" y="416" width="248" height="1" fill="#4CB000"/>
<rect x="323" y="416" width="1" height="1" fill="#4CB000"/>
<rect x="324" y="417" width="1" height="1" fill="#4CB000"/>
<rect x="325" y="418" width="1" height="1" fill="#4CB000"/>
<rect x="326" y="419" width="1" height="1" fill="#4CB000"/>
<rect x="327" y="420" width="1" height="1" fill="#4CB000"/>
<rect x="328" y="421" width="1" height="1" fill="#4CB000"/>
<rect x="329" y="421" width="20" height="1" fill="#FF00FF"/>
<rect x="359" y="421" width="37" height="1" fill="#FF00FF"/>
<rect x="349" y="421" width="10" height="1" fill="#4CB000"/>
<rect x="396" y="421" width="2" height="1" fill="#4CB000"/>
<rect x="397" y="420" width="9" height="1" fill="#4CB000"/>
<rect x="405" y="421" width="214" height="1" fill="#4CB000"/>
<rect x="75" y="440" width="248" height="1" fill="#FF0000"/>
<rect x="323" y="440" width="1" height="1" fill="#FF0000"/>
<rect x="324" y="441" width="1" height="1" fill="#FF0000"/>
<rect x="325" y="442" width="1" height="1" fill="#FF0000"/>
<rect x="326" y="443" width="1" height="1" fill="#FF0000"/>
<rect x="327" y="444" width="1" height="1" fill="#FF0000"/>
<rect x="328" y="445" width="1" height="1" fill="#FF0000"/>
<rect x="329" y="445" width="20" height="1" fill="#FF0000"/>
<rect x="349" y="446" width="9" height="1" fill="#FF0000"/>
<rect x="358" y="445" width="15" height="1" fill="#FF0000"/>
<rect x="373" y="444" width="12" height="1" fill="#FF0000"/>
<rect x="385" y="445" width="234" height="1" fill="#FF0000"/>
<rect x="75" y="458" width="247" height="1" fill="#969696"/>
<rect x="322" y="458" width="1" height="1" fill="#969696"/>
<rect x="323" y="457" width="1" height="1" fill="#969696"/>
<rect x="324" y="456" width="1" height="1" fill="#969696"/>
<rect x="325" y="455" width="1" height="1" fill="#969696"/>
<rect x="326" y="454" width="1" height="1" fill="#969696"/>
<rect x="327" y="454" width="27" height="1" fill="#969696"/>
<rect x="354" y="455" width="5" height="1" fill="#969696"/>
<rect x="359" y="454" width="12" height="1" fill="#969696"/>
<rect x="371" y="453" width="16" height="1" fill="#969696"/>
<rect x="387" y="454" width="232" height="1" fill="#969696"/>
<rect x="75" y="485" width="247" height="3" fill="#FF00FF"/>
<rect x="322" y="484" width="1" height="2" fill="#FF00FF"/>
<rect x="323" y="483" width="1" height="2" fill="#FF00FF"/>
<rect x="324" y="482" width="1" height="2" fill="#FF00FF"/>
<rect x="325" y="481" width="1" height="2" fill="#FF00FF"/>
<rect x="326" y="480" width="1" height="2" fill="#FF00FF"/>
<rect x="327" y="479" width="1" height="2" fill="#FF00FF"/>
<rect x="328" y="478" width="1" height="2" fill="#FF00FF"/>
<rect x="329" y="478" width="290" height="1" fill="#FF00FF"/>
<rect x="75" y="497" width="247" height="1" fill="#FF0000"/>
<rect x="322" y="496" width="3" height="1" fill="#FF0000"/>
<rect x="325" y="495" width="11" height="1" fill="#FF0000"/>
<rect x="336" y="496" width="10" height="1" fill="#FF0000"/>
<rect x="346" y="495" width="15" height="1" fill="#FF0000"/>
<rect x="361" y="496" width="36" height="1" fill="#FF0000"/>
<rect x="397" y="495" width="222" height="1" fill="#FF0000"/>
<rect x="75" y="522" width="247" height="1" fill="#FF9000"/>
<rect x="322" y="522" width="1" height="1" fill="#FF9000"/>
<rect x="323" y="521" width="1" height="1" fill="#FF9000"/>
<rect x="324" y="520" width="1" height="1" fill="#FF9000"/>
<rect x="325" y="519" width="1" height="1" fill="#FF9000"/>
<rect x="326" y="519" width="1" height="1" fill="#FF9000"/>
<rect x="327" y="518" width="1" height="1" fill="#FF9000"/>
<rect x="328" y="517" width="1" height="1" fill="#FF9000"/>
<rect x="329" y="516" width="1" height="1" fill="#FF9000"/>
<rect x="330" y="516" width="67" height="1" fill="#FF9000"/>
<rect x="397" y="517" width="222" height="1" fill="#FF9000"/>
<rect x="75" y="532" width="247" height="1" fill="#4CB000"/>
<rect x="322" y="533" width="1" height="1" fill="#FF00FF"/>
<rect x="323" y="534" width="1" height="1" fill="#FF00FF"/>
<rect x="324" y="535" width="1" height="1" fill="#FF00FF"/>
<rect x="325" y="536" width="1" height="1" fill="#FF00FF"/>
<rect x="326" y="538" width="1" height="1" fill="#FF00FF"/>
<rect x="327" y="539" width="1" height="1" fill="#FF00FF"/>
<rect x="328" y="540" width="1" height="1" fill="#FF00FF"/>
<rect x="329" y="540" width="68" height="1" fill="#FF00FF"/>
<rect x="397" y="539" width="9" height="1" fill="#FF00FF"/>
<rect x="406" y="540" width="213" height="1" fill="#FF00FF"/>
<rect x="621" y="357" width="3" height="9" fill="#4CB000"/>
<rect x="621" y="366" width="3" height="9" fill="#FF00FF"/>
<rect x="621" y="375" width="3" height="9" fill="#00A8FF"/>
<rect x="621" y="384" width="3" height="10" fill="#FF0000"/>
<rect x="621" y="394" width="3" height="9" fill="#969696"/>
<rect x="621" y="403" width="3" height="9" fill="#FF9000"/>
<rect x="621" y="412" width="3" height="10" fill="#4CB000"/>
<rect x="621" y="422" width="3" height="9" fill="#FF00FF"/>
<rect x="621" y="431" width="3" height="9" fill="#00A8FF"/>
<rect x="621" y="440" width="3" height="10" fill="#FF0000"/>
<rect x="621" y="450" width="3" height="9" fill="#969696"/>
<rect x="621" y="459" width="3" height="9" fill="#FF9000"/>
<rect x="621" y="468" width="3" height="9" fill="#4CB000"/>
<rect x="621" y="477" width="3" height="10" fill="#FF00FF"/>
<rect x="621" y="487" width="3" height="9" fill="#00A8FF"/>
<rect x="621" y="496" width="3" height="9" fill="#FF0000"/>
<rect x="621" y="505" width="3" height="10" fill="#969696"/>
<rect x="621" y="515" width="3" height="9" fill="#FF9000"/>
<rect x="621" y="524" width="3" height="9" fill="#4CB000"/>
<rect x="621" y="533" width="3" height="9" fill="#FF00FF"/>
<text x="628" y="368.9" font-size="13.4" fill="#FFFFFF" stroke="#FFFFFF" textLength="61.5" lengthAdjust="spacingAndGlyphs">Spin/P_CK</text>
<text x="628" y="387.45" font-size="13.4" fill="#FFFFFF" stroke="#FFFFFF" textLength="66.3" lengthAdjust="spacingAndGlyphs">-X_toSaturn</text>
<text x="628" y="406.0" font-size="13.4" fill="#FFFFFF" stroke="#FFFFFF" textLength="66.3" lengthAdjust="spacingAndGlyphs">-Y_toSaturn</text>
<text x="628" y="424.54999999999995" font-size="13.4" fill="#FFFFFF" stroke="#FFFFFF" textLength="66.3" lengthAdjust="spacingAndGlyphs">-Z_toSaturn</text>
<text x="628" y="443.09999999999997" font-size="13.4" fill="#FFFFFF" stroke="#FFFFFF" textLength="52" lengthAdjust="spacingAndGlyphs">-X_toSun</text>
<text x="628" y="461.65" font-size="13.4" fill="#FFFFFF" stroke="#FFFFFF" textLength="52" lengthAdjust="spacingAndGlyphs">-Y_toSun</text>
<text x="628" y="480.2" font-size="13.4" fill="#FFFFFF" stroke="#FFFFFF" textLength="52" lengthAdjust="spacingAndGlyphs">-Z_toSun</text>
<text x="628" y="498.75" font-size="13.4" fill="#FFFFFF" stroke="#FFFFFF" textLength="54.7" lengthAdjust="spacingAndGlyphs">-X_toNEP</text>
<text x="628" y="517.3" font-size="13.4" fill="#FFFFFF" stroke="#FFFFFF" textLength="54.7" lengthAdjust="spacingAndGlyphs">-Y_toNEP</text>
<text x="628" y="535.85" font-size="13.4" fill="#FFFFFF" stroke="#FFFFFF" textLength="54.7" lengthAdjust="spacingAndGlyphs">-Z_toNEP</text>
<text x="38" y="449.5" font-size="13" fill="#FFFFFF" stroke="#FFFFFF" text-anchor="middle" textLength="90" lengthAdjust="spacingAndGlyphs" transform="rotate(-90 38 449.5)">Cassini Attitude</text>
<text x="62.5" y="377.9" font-size="10.2" fill="#fff" stroke="#fff" text-anchor="middle">180<tspan font-size="6" dy="-4.5">o</tspan></text>
<text x="62.5" y="396.4" font-size="10.2" fill="#fff" stroke="#fff" text-anchor="middle">0<tspan font-size="6" dy="-4.5">o</tspan></text>
<text x="62.5" y="526.6" font-size="10.2" fill="#fff" stroke="#fff" text-anchor="middle">100<tspan font-size="6" dy="-4.5">o</tspan></text>
<text x="62.5" y="545.3" font-size="10.2" fill="#fff" stroke="#fff" text-anchor="middle">0<tspan font-size="6" dy="-4.5">o</tspan></text>
<text x="75.5" y="565.4" font-size="12.5" fill="#FFFFFF" stroke="#FFFFFF" text-anchor="middle" textLength="31.6" lengthAdjust="spacingAndGlyphs">00:00</text>
<text x="211.8" y="565.4" font-size="12.5" fill="#FFFFFF" stroke="#FFFFFF" text-anchor="middle" textLength="31.6" lengthAdjust="spacingAndGlyphs">06:00</text>
<text x="347.8" y="565.4" font-size="12.5" fill="#FFFFFF" stroke="#FFFFFF" text-anchor="middle" textLength="31.6" lengthAdjust="spacingAndGlyphs">12:00</text>
<text x="483.8" y="565.4" font-size="12.5" fill="#FFFFFF" stroke="#FFFFFF" text-anchor="middle" textLength="31.6" lengthAdjust="spacingAndGlyphs">18:00</text>
<text x="75.5" y="596.1999999999999" font-size="12.5" fill="#FFFFFF" stroke="#FFFFFF" text-anchor="middle" textLength="31.6" lengthAdjust="spacingAndGlyphs">40.53</text>
<text x="211.8" y="596.1999999999999" font-size="12.5" fill="#FFFFFF" stroke="#FFFFFF" text-anchor="middle" textLength="31.6" lengthAdjust="spacingAndGlyphs">40.53</text>
<text x="347.8" y="596.1999999999999" font-size="12.5" fill="#FFFFFF" stroke="#FFFFFF" text-anchor="middle" textLength="31.6" lengthAdjust="spacingAndGlyphs">40.49</text>
<text x="483.8" y="596.1999999999999" font-size="12.5" fill="#FFFFFF" stroke="#FFFFFF" text-anchor="middle" textLength="31.6" lengthAdjust="spacingAndGlyphs">40.41</text>
<text x="75.5" y="612.4" font-size="12.5" fill="#FFFFFF" stroke="#FFFFFF" text-anchor="middle" textLength="23.8" lengthAdjust="spacingAndGlyphs">0.21</text>
<text x="211.8" y="612.4" font-size="12.5" fill="#FFFFFF" stroke="#FFFFFF" text-anchor="middle" textLength="23.8" lengthAdjust="spacingAndGlyphs">0.21</text>
<text x="347.8" y="612.4" font-size="12.5" fill="#FFFFFF" stroke="#FFFFFF" text-anchor="middle" textLength="23.8" lengthAdjust="spacingAndGlyphs">0.21</text>
<text x="483.8" y="612.4" font-size="12.5" fill="#FFFFFF" stroke="#FFFFFF" text-anchor="middle" textLength="23.8" lengthAdjust="spacingAndGlyphs">0.21</text>
<text x="75.5" y="627.6999999999999" font-size="12.5" fill="#FFFFFF" stroke="#FFFFFF" text-anchor="middle" textLength="26.6" lengthAdjust="spacingAndGlyphs">1511</text>
<text x="211.8" y="627.6999999999999" font-size="12.5" fill="#FFFFFF" stroke="#FFFFFF" text-anchor="middle" textLength="26.6" lengthAdjust="spacingAndGlyphs">1514</text>
<text x="347.8" y="627.6999999999999" font-size="12.5" fill="#FFFFFF" stroke="#FFFFFF" text-anchor="middle" textLength="26.6" lengthAdjust="spacingAndGlyphs">1517</text>
<text x="483.8" y="627.6999999999999" font-size="12.5" fill="#FFFFFF" stroke="#FFFFFF" text-anchor="middle" textLength="26.6" lengthAdjust="spacingAndGlyphs">1520</text>
<text x="75.5" y="643.1" font-size="12.5" fill="#FFFFFF" stroke="#FFFFFF" text-anchor="middle" textLength="31.6" lengthAdjust="spacingAndGlyphs">40.53</text>
<text x="211.8" y="643.1" font-size="12.5" fill="#FFFFFF" stroke="#FFFFFF" text-anchor="middle" textLength="31.6" lengthAdjust="spacingAndGlyphs">40.53</text>
<text x="347.8" y="643.1" font-size="12.5" fill="#FFFFFF" stroke="#FFFFFF" text-anchor="middle" textLength="31.6" lengthAdjust="spacingAndGlyphs">40.49</text>
<text x="483.8" y="643.1" font-size="12.5" fill="#FFFFFF" stroke="#FFFFFF" text-anchor="middle" textLength="31.6" lengthAdjust="spacingAndGlyphs">40.41</text>
<text x="8" y="573.3" font-size="12" fill="#FFFFFF" stroke="#FFFFFF" textLength="25" lengthAdjust="spacingAndGlyphs">UTC</text>
<text x="8" y="604.5" font-size="12" fill="#FFFFFF" stroke="#FFFFFF">R</text>
<text x="16.5" y="613.6" font-size="12.5" fill="#FFFFFF" stroke="#FFFFFF">satur</text>
<text x="8" y="620.3" font-size="12" fill="#FFFFFF" stroke="#FFFFFF">Lat</text>
<text x="8" y="635.5" font-size="12" fill="#FFFFFF" stroke="#FFFFFF">LT</text>
<text x="8" y="652.8" font-size="12" fill="#FFFFFF" stroke="#FFFFFF">L</text>
<text x="15" y="661.5" font-size="12.5" fill="#FFFFFF" stroke="#FFFFFF">saturn</text>
<text x="319" y="688" font-size="11" fill="#FFFFFF" stroke="#FFFFFF" textLength="112.5" lengthAdjust="spacingAndGlyphs">Background Subtracted</text>
<text x="569" y="688" font-size="11" fill="#FFFFFF" stroke="#FFFFFF" textLength="66" lengthAdjust="spacingAndGlyphs">in Stare Mode</text>
</svg>
</body></html>
